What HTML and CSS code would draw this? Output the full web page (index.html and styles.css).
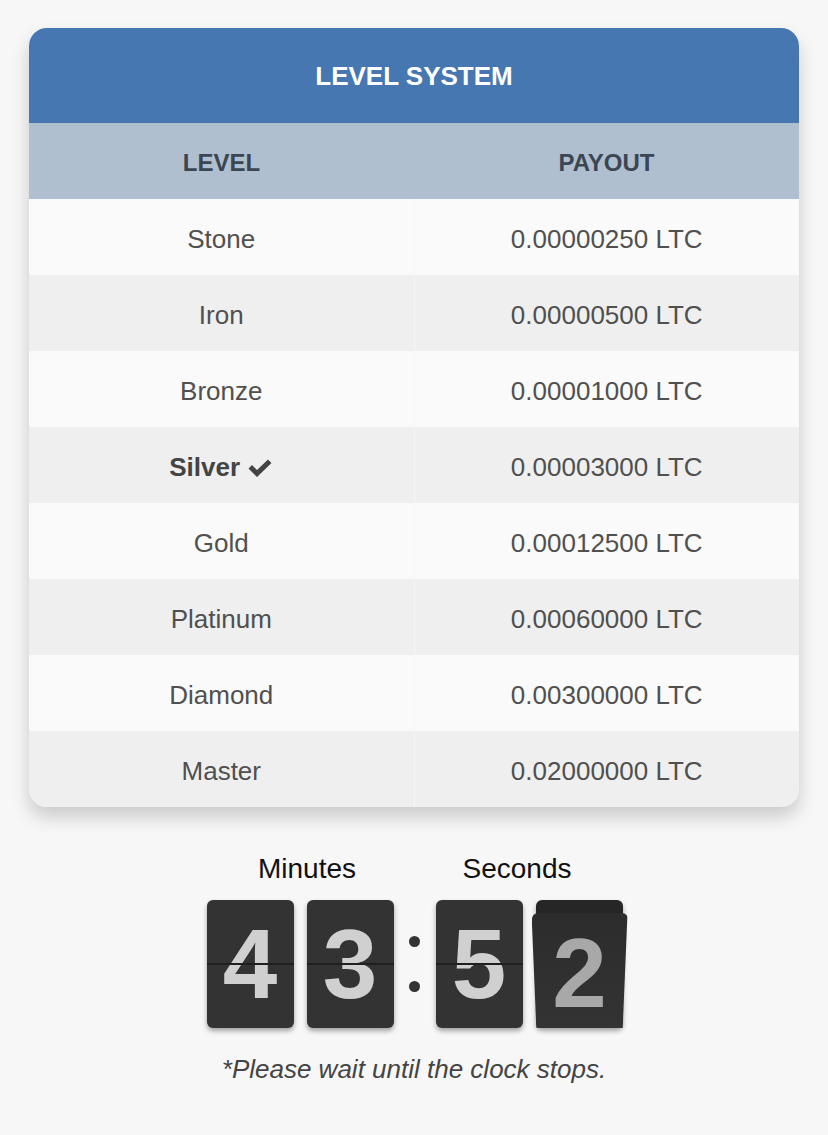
FILE: index.html
```html
<!DOCTYPE html>
<html lang="en">
<head>
    <meta charset="UTF-8">
    <meta name="viewport" content="width=device-width, initial-scale=1.0">
    <title>Level System</title>
    <link rel="stylesheet" href="styles.css">
</head>
<body>
    <div class="card">
        <div class="card-title">LEVEL SYSTEM</div>
        <table>
            <thead>
                <tr>
                    <th>LEVEL</th>
                    <th>PAYOUT</th>
                </tr>
            </thead>
            <tbody>
                <tr><td>Stone</td><td>0.00000250 LTC</td></tr>
                <tr><td>Iron</td><td>0.00000500 LTC</td></tr>
                <tr><td>Bronze</td><td>0.00001000 LTC</td></tr>
                <tr class="current">
                    <td>Silver
                        <svg class="check" viewBox="0 0 26 20" width="26" height="20">
                            <path d="M1.5 10.5 L5 7 L10 12 L21 1.5 L24.5 5 L10 19 Z" fill="#444"/>
                        </svg>
                    </td>
                    <td>0.00003000 LTC</td>
                </tr>
                <tr><td>Gold</td><td>0.00012500 LTC</td></tr>
                <tr><td>Platinum</td><td>0.00060000 LTC</td></tr>
                <tr><td>Diamond</td><td>0.00300000 LTC</td></tr>
                <tr><td>Master</td><td>0.02000000 LTC</td></tr>
            </tbody>
        </table>
    </div>

    <div class="clock">
        <div class="clock-group minutes">
            <div class="clock-label">Minutes</div>
            <div class="digits">
                <div class="digit"><span>4</span></div>
                <div class="digit"><span>3</span></div>
            </div>
        </div>
        <div class="colon">
            <i></i>
            <i></i>
        </div>
        <div class="clock-group seconds">
            <div class="clock-label">Seconds</div>
            <div class="digits">
                <div class="digit"><span>5</span></div>
                <div class="digit flipping">
                    <div class="flip-card"><span>2</span></div>
                </div>
            </div>
        </div>
    </div>

    <p class="note">*Please wait until the clock stops.</p>
</body>
</html>
```

FILE: styles.css
```css
body {
    margin: 0;
    background-color: #f7f7f7;
    font-family: "Liberation Sans", Arial, sans-serif;
    color: #444;
}
.card {
    margin: 28px 29px 0 29px;
    border-radius: 18px;
    overflow: hidden;
    background-color: #fafafa;
    box-shadow: 0 10px 18px rgba(0, 0, 0, 0.18);
}
.card-title {
    height: 95px;
    line-height: 97px;
    background-color: #4677b0;
    color: #fff;
    text-align: center;
    font-weight: bold;
    font-size: 26px;
}
table {
    width: 100%;
    border-collapse: collapse;
    table-layout: fixed;
}
th, td {
    padding: 0;
    text-align: center;
}
th {
    height: 73px;
    padding-top: 3px;
    background-color: #afbfd0;
    color: #3b4652;
    font-size: 24px;
    font-weight: bold;
}
td {
    height: 72px;
    padding-top: 4px;
    font-size: 26px;
    color: #505050;
}
td + td {
    border-left: 1px solid #f6f6f6;
}
tbody tr:nth-child(odd) td {
    background-color: #fafafa;
}
tbody tr:nth-child(even) td {
    background-color: #efefef;
}
.current td:first-child {
    font-weight: bold;
    color: #444;
}
.check {
    vertical-align: -2px;
}
.clock {
    display: flex;
    justify-content: center;
    align-items: flex-end;
    margin-top: 46px;
    padding-left: 1px;
}
.clock-label {
    text-align: center;
    font-size: 28px;
    color: #111;
    height: 47px;
}
.minutes .clock-label {
    padding-left: 14px;
}
.seconds .clock-label {
    padding-right: 24px;
}
.digits {
    display: flex;
    gap: 13px;
}
.digit {
    position: relative;
    width: 87px;
    height: 128px;
    border-radius: 6px;
    background-color: #333;
    box-shadow: 0 3px 5px rgba(0, 0, 0, 0.35);
    display: flex;
    align-items: center;
    justify-content: center;
    overflow: hidden;
}
.digit span {
    font-size: 98px;
    font-weight: bold;
    color: #d0d0d0;
    line-height: 1;
}
.digit::after {
    content: "";
    position: absolute;
    left: 0;
    right: 0;
    top: 63px;
    height: 2px;
    background-color: #1f1f1f;
}
.colon {
    width: 42px;
    height: 128px;
    display: flex;
    flex-direction: column;
    align-items: center;
    justify-content: center;
    gap: 34px;
}
.colon i {
    width: 11px;
    height: 11px;
    border-radius: 50%;
    background-color: #333;
}
.digit.flipping {
    overflow: visible;
    background-color: #262626;
}
.digit.flipping::after {
    display: none;
}
.flip-card {
    position: absolute;
    left: -4px;
    right: -5px;
    top: 13px;
    bottom: 0;
    border-radius: 6px;
    background: linear-gradient(#2c2c2c, #333);
    display: flex;
    align-items: center;
    justify-content: center;
    clip-path: polygon(0 0, 100% 0, 95% 100%, 5% 100%);
}
.flip-card span {
    color: #a8a8a8;
    margin-top: 4px;
}
.note {
    margin: 26px 0 0 0;
    text-align: center;
    font-style: italic;
    font-size: 26px;
    color: #444;
}
```
